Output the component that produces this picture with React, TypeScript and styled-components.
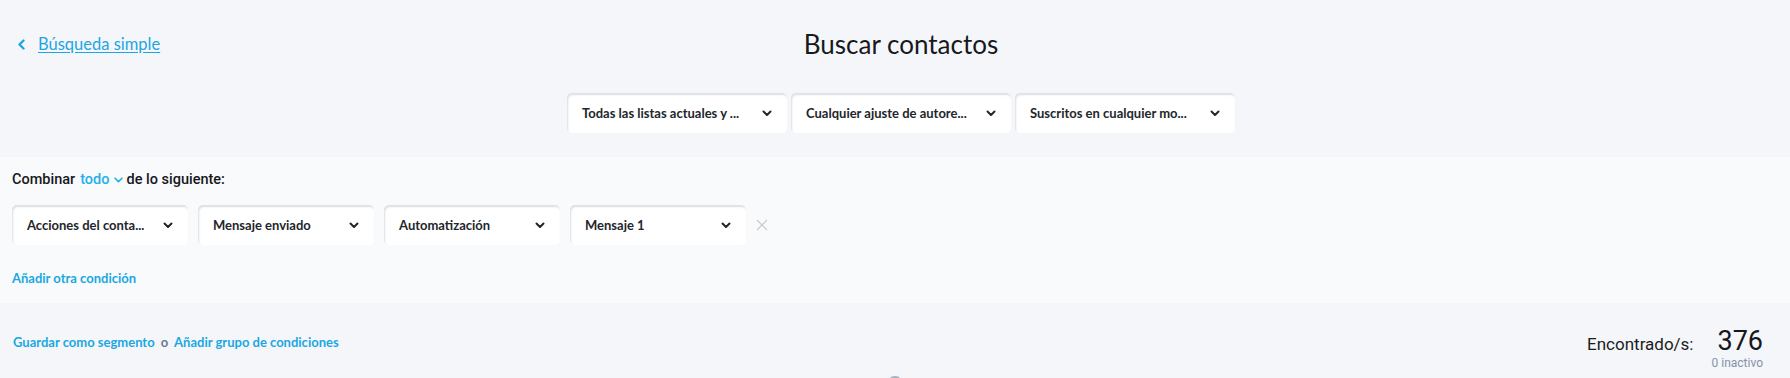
import React from 'react';
import { styled, createGlobalStyle } from 'styled-components';

const GlobalStyle = createGlobalStyle`
  html, body {
    margin: 0;
    padding: 0;
    background: #f5f6fa;
  }
  * {
    box-sizing: border-box;
  }
`;

const Page = styled.div`
  width: 1790px;
  font-family: Lato, 'Noto Sans', sans-serif;
  color: #1c1f24;
`;

const TopSection = styled.section`
  background: #f5f6fa;
  padding: 26px 0 24px 12px;
  height: 157px;
`;

const HeaderRow = styled.div`
  display: grid;
  grid-template-columns: 1fr auto 1fr;
  align-items: center;
  height: 36px;
`;

const BackLink = styled.a`
  display: flex;
  align-items: center;
  gap: 12px;
  margin-left: 5px;
  color: #1ea6e2;
  font-size: 16.5px;
  text-decoration: underline;
  text-underline-offset: 2px;
  cursor: pointer;
  justify-self: start;
`;

const Title = styled.h1`
  margin: 0;
  font-size: 26px;
  font-weight: 400;
  color: #16191d;
  line-height: 36px;
`;

const FilterRow = styled.div`
  display: flex;
  justify-content: center;
  gap: 4px;
  margin-top: 31px;
`;

const Select = styled.div<{ $width: number }>`
  width: ${(p) => p.$width}px;
  height: 40px;
  background: #fff;
  border-radius: 5px;
  box-shadow: inset 1px 2px 2px rgba(40, 50, 70, 0.16);
  display: flex;
  align-items: center;
  justify-content: space-between;
  padding: 0 15px 0 15px;
  font-size: 13px;
  font-weight: 700;
  color: #22262b;
  white-space: nowrap;
`;

const SelectLabel = styled.span``;

const ConditionSection = styled.section`
  background: #f8fafb;
  padding: 12px 12px 0;
  height: 146px;
`;

const CombineLine = styled.div`
  display: flex;
  align-items: center;
  font-family: Roboto, 'Liberation Sans', sans-serif;
  font-size: 14.5px;
  font-weight: 500;
  line-height: 22px;
  color: #15181c;
`;

const Mode = styled.span`
  display: inline-flex;
  align-items: center;
  gap: 5px;
  color: #25b0e8;
  margin: 0 3px 0 5px;
`;

const ConditionRow = styled.div`
  display: flex;
  align-items: center;
  gap: 10px;
  margin-top: 14px;
`;

const RemoveButton = styled.span`
  display: flex;
  align-items: center;
`;

const AddLink = styled.a`
  color: #1aa8e2;
  font-weight: 700;
  font-size: 13px;
  cursor: pointer;
`;

const AddRow = styled.div`
  margin-top: 23px;
  line-height: 18px;
`;

const Footer = styled.section`
  background: #f5f6fa;
  display: flex;
  justify-content: space-between;
  align-items: flex-start;
  padding: 23px 27px 0 13px;
  height: 73px;
`;

const FooterLinks = styled.div`
  display: flex;
  align-items: center;
  gap: 6px;
  margin-top: 8px;
`;

const Or = styled.span`
  color: #6a7a90;
  font-weight: 700;
  font-size: 13px;
`;

const Result = styled.div`
  display: flex;
  align-items: flex-start;
  gap: 18px;
  font-family: Roboto, 'Liberation Sans', sans-serif;
`;

const ResultLabel = styled.span`
  font-size: 17px;
  color: #1a1d21;
  margin-top: 8px;
`;

const Count = styled.div`
  display: flex;
  flex-direction: column;
  align-items: flex-end;
`;

const CountValue = styled.span`
  font-size: 27px;
  line-height: 30px;
  color: #15181c;
`;

const Inactive = styled.span`
  font-size: 12px;
  color: #8394a8;
`;

const Spinner = styled.div`
  display: flex;
  justify-content: center;
  background: #f5f6fa;
`;

const SpinnerRing = styled.div`
  width: 16px;
  height: 16px;
  border-radius: 50%;
  border: 2px solid #d4dae1;
  border-top-color: #a7b1bc;
`;

const Chevron = ({ color = '#22262b' }: { color?: string }) => (
  <svg width="10" height="7" viewBox="0 0 10 7" fill="none">
    <path d="M1.5 1.5L5 5L8.5 1.5" stroke={color} strokeWidth="2" strokeLinecap="round" strokeLinejoin="round" />
  </svg>
);

const SmallChevron = () => (
  <svg width="9" height="6" viewBox="0 0 9 6" fill="none">
    <path d="M1 1.2L4.5 4.6L8 1.2" stroke="#25b0e8" strokeWidth="1.6" strokeLinecap="round" strokeLinejoin="round" />
  </svg>
);

const BackChevron = () => (
  <svg width="9" height="11" viewBox="0 0 9 11" fill="none">
    <path d="M6.5 1.5L2.5 5.5L6.5 9.5" stroke="#1ea6e2" strokeWidth="2.4" strokeLinecap="round" strokeLinejoin="round" />
  </svg>
);

const CloseIcon = () => (
  <svg width="12" height="12" viewBox="0 0 12 12" fill="none">
    <path d="M1 1L11 11M11 1L1 11" stroke="#c3c9d0" strokeWidth="1.1" />
  </svg>
);

const topFilters = [
  'Todas las listas actuales y ...',
  'Cualquier ajuste de autore...',
  'Suscritos en cualquier mo...',
];

const conditions = ['Acciones del conta...', 'Mensaje enviado', 'Automatización', 'Mensaje 1'];

const App: React.FC = () => {
  return (
    <Page>
      <GlobalStyle />
      <TopSection>
        <HeaderRow>
          <BackLink>
            <BackChevron />
            Búsqueda simple
          </BackLink>
          <Title>Buscar contactos</Title>
          <div />
        </HeaderRow>
        <FilterRow>
          {topFilters.map((f) => (
            <Select key={f} $width={220}>
              <SelectLabel>{f}</SelectLabel>
              <Chevron />
            </Select>
          ))}
        </FilterRow>
      </TopSection>

      <ConditionSection>
        <CombineLine>
          Combinar
          <Mode>
            todo <SmallChevron />
          </Mode>
          de lo siguiente:
        </CombineLine>
        <ConditionRow>
          {conditions.map((c) => (
            <Select key={c} $width={176}>
              <SelectLabel>{c}</SelectLabel>
              <Chevron />
            </Select>
          ))}
          <RemoveButton>
            <CloseIcon />
          </RemoveButton>
        </ConditionRow>
        <AddRow>
          <AddLink>Añadir otra condición</AddLink>
        </AddRow>
      </ConditionSection>

      <Footer>
        <FooterLinks>
          <AddLink>Guardar como segmento</AddLink>
          <Or>o</Or>
          <AddLink>Añadir grupo de condiciones</AddLink>
        </FooterLinks>
        <Result>
          <ResultLabel>Encontrado/s:</ResultLabel>
          <Count>
            <CountValue>376</CountValue>
            <Inactive>0 inactivo</Inactive>
          </Count>
        </Result>
      </Footer>
      <Spinner>
        <SpinnerRing />
      </Spinner>
    </Page>
  );
};

export default App;
